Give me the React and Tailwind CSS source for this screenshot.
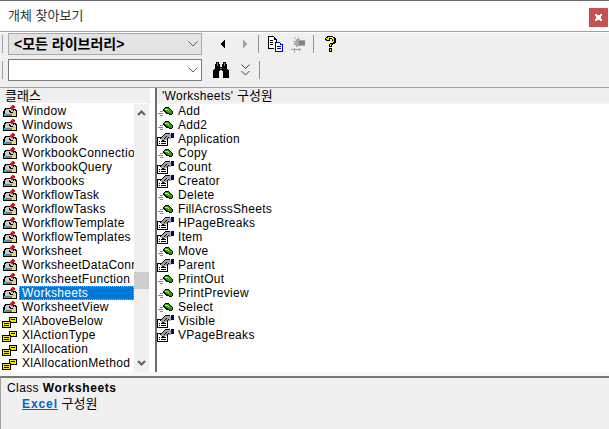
import React from "react";

const FONT = "font-['Liberation_Sans','Noto_Sans_CJK_KR',sans-serif]";

function ClassIcon() {
  return (
    <svg width="16" height="14" viewBox="0 0 16 14" shapeRendering="crispEdges" className="shrink-0">
      <path d="M3 4h9v1h2v1h1v7H1V7h1V5h1z" fill="#000" />
      <path d="M3 6h1V5h7v1h2v1h1v3H3V7z" fill="#c8c8c8" />
      <path d="M2 10h2v2H2z" fill="#10c8d8" />
      <path d="M10 10h4v2h-4z" fill="#e8e060" />
      <path d="M4 10h6v2H4z" fill="#7c7c7c" />
      <path d="M10 1h2v1h1v2h-1v1h-1v1H9V5H8V3h1V2h1z" fill="#d81818" />
      <path d="M7 6h1v1h1v1h2v1H8V8H7zM11 6h1V5h1v1h-1v1h-1z" fill="#000" />
    </svg>
  );
}

function EnumIcon() {
  return (
    <svg width="16" height="14" viewBox="0 0 16 14" shapeRendering="crispEdges" className="shrink-0">
      <path d="M7 3h8v6H7z" fill="#000" />
      <path d="M8 4h6v4H8z" fill="#f4e800" />
      <path d="M9 5h4v1H9z" fill="#000" />
      <path d="M0 7h9v7H0z" fill="#000" />
      <path d="M1 8h7v5H1z" fill="#f4e800" />
      <path d="M2 9h5v1H2zM2 11h5v1H2z" fill="#000" />
    </svg>
  );
}

function MethodIcon() {
  return (
    <svg width="17" height="14" viewBox="0 0 17 14" shapeRendering="crispEdges" className="shrink-0">
      <path d="M3 7h3v1H3zM1 9h5v1H1zM3 11h3v1H3z" fill="#8a8a8a" />
      <path d="M8 3h4v1h1v1h1v1h1v1h1v3h-1v1h-3v-1H9V9H8V8H7V7H6V5h1V4h1z" fill="#000" />
      <path d="M8 4h4v1h1v1h1v1h1v3h-3V9h-2V8H9V7H8V6H7V5h1z" fill="#28a810" />
      <path d="M8 5h3v1h1v1h-1V6H8z" fill="#c0f040" />
      <path d="M10 8h1v1h2v1h-1V9h-2z" fill="#0c5c08" />
    </svg>
  );
}

function PropIcon() {
  return (
    <svg width="17" height="14" viewBox="0 0 17 14" shapeRendering="crispEdges" className="shrink-0">
      <path d="M0 5h11v9H0z" fill="#000" />
      <path d="M1 6h9v7H1z" fill="#fff" />
      <path d="M2 9h1v1H2zM4 9h5v1H4zM2 11h1v1H2zM4 11h5v1H4z" fill="#000" />
      <path d="M4 6h1V5h1V4h1V3h1V2h6v5h-4v1H8v1H6V8H4z" fill="#a4a4a4" />
      <path d="M3 6h1V5h1V4h1V3h1V2h1V1h5v1H8v1H7v1H6v1H5v1H4v1H3z" fill="#000" />
      <path d="M7 6h1V5h1V4h1v1H9v1H8v1H7zM10 6h1V5h1v1h-1v1h-1zM5 8h2v1H5z" fill="#000" />
      <path d="M14 1h3v5h-3z" fill="#000080" />
    </svg>
  );
}

function Copy() {
  return (
    <svg width="16" height="16" viewBox="0 0 16 16" shapeRendering="crispEdges" className="shrink-0">
      <path d="M0 0h6v1h1v1h1v1h1v3H8V4H6V2H1v10h5v1H0z" fill="#000" />
      <path d="M1 1h5v1H1zM1 2h5v2h2v2H6v6H1z" fill="#fff" />
      <path d="M2 4h3v1H2zM2 6h3v1H2zM2 8h3v1H2z" fill="#000" />
      <path d="M7 6h5v1h1v1h2v8H7z" fill="#0000c0" />
      <path d="M8 7h4v2h2v6H8z" fill="#fff" />
      <path d="M9 10h4v1H9zM9 12h4v1H9z" fill="#0000c0" />
    </svg>
  );
}

function ViewDef() {
  return (
    <svg width="17" height="18" viewBox="0 0 17 18" shapeRendering="crispEdges" className="shrink-0">
      <path d="M4 2h1v1h1v1h2V2h1v2h1v1h5v6H8v1H6v-2H4V8h1V7H3V6h3V4H5V3H4z" fill="#a8a8a8" />
      <path d="M9 6h6v4H9z" fill="#808080" />
      <path d="M1 14h8v-1h1v1h1v1h-1v1H9v-1H1z" fill="#a0a0a0" />
      <path d="M4 13h1v5H4z" fill="#a0a0a0" />
    </svg>
  );
}

function Help() {
  return (
    <svg width="11" height="16" viewBox="0 0 11 16" shapeRendering="crispEdges" className="shrink-0">
      <path d="M2 0h6v1h2v1h1v5h-1v1H8v1H7v2H4V8h1V7h2V3H5v2H1V4H0V2h1V1h1zM4 12h3v4H4z" fill="#000" />
      <path d="M3 1h5v1h1v4H8v1H6V6h1V5h1V3H7V2H4v2H2V3H1V2h2zM5 8h1v2H5zM5 13h1v2H5z" fill="#f8f000" />
    </svg>
  );
}

function Binoculars() {
  return (
    <svg width="16" height="16" viewBox="0 0 16 16" shapeRendering="crispEdges" className="shrink-0">
      <path d="M3 0h3v2h1v3h2V2h1V0h3v2h1v5h1v1h1v8h-6V9H9V8H7v1H6v7H0V8h1V7h1V2h1z" fill="#000" />
      <path d="M4 1h1v3H4zM11 1h1v3h-1zM7 6h2v1H7z" fill="#808080" />
    </svg>
  );
}

function DoubleChevron() {
  return (
    <svg width="9" height="12" viewBox="0 0 9 12" fill="none" stroke="#404040" className="shrink-0">
      <path d="M0.5 0.5l4 4 4-4M0.5 7l4 4 4-4" />
    </svg>
  );
}

function ComboChevron() {
  return (
    <svg width="10" height="6" viewBox="0 0 10 6" fill="none" stroke="#606060" className="shrink-0">
      <path d="M0.5 0.5l4.5 4.5 4.5-4.5" />
    </svg>
  );
}

function ClassRow({ icon, text, selected }) {
  return (
    <div className="flex h-[14px] shrink-0 items-center pl-[2px]">
      {icon}
      <span
        className={`ml-px flex h-[14px] min-w-0 flex-1 items-center overflow-hidden whitespace-nowrap pl-[3px] text-[12px] leading-[14px] tracking-[0.3px] ${
          selected ? "bg-[#0078d7] text-white outline-1 -outline-offset-1 outline-dotted outline-[#e8a050]" : "text-black"
        }`}
      >
        {text}
      </span>
    </div>
  );
}

function MemberRow({ icon, text }) {
  return (
    <div className="flex h-[14px] shrink-0 items-center">
      {icon}
      <span className="ml-[4px] whitespace-nowrap text-[12px] leading-[14px] tracking-[0.3px] text-black">{text}</span>
    </div>
  );
}

const classes = [
  "Window", "Windows", "Workbook", "WorkbookConnection", "WorkbookQuery", "Workbooks", "WorkflowTask",
  "WorkflowTasks", "WorkflowTemplate", "WorkflowTemplates", "Worksheet", "WorksheetDataConnection",
  "WorksheetFunction", "Worksheets", "WorksheetView",
];
const enums = ["XlAboveBelow", "XlActionType", "XlAllocation", "XlAllocationMethod", "XlAllocationNamespace"];
const members = [
  ["Add", "m"], ["Add2", "m"], ["Application", "p"], ["Copy", "m"], ["Count", "p"], ["Creator", "p"],
  ["Delete", "m"], ["FillAcrossSheets", "m"], ["HPageBreaks", "p"], ["Item", "p"], ["Move", "m"],
  ["Parent", "p"], ["PrintOut", "m"], ["PrintPreview", "m"], ["Select", "m"], ["Visible", "p"], ["VPageBreaks", "p"],
];

export default function App() {
  return (
    <div className={`${FONT} flex h-[429px] w-[609px] flex-col overflow-hidden bg-white text-black`}>
      {/* Title bar */}
      <div className="flex h-[32px] shrink-0 items-start border-t border-b border-t-[#6e6e6e] border-b-[#a0a0a0] bg-white">
        <span className="ml-[8px] mt-[7px] text-[13px] leading-[16px] text-[#333]">개체 찾아보기</span>
        <div className="ml-auto mr-px mt-[7px] flex h-[19px] w-[19px] items-center justify-center bg-[#c75050]">
          <svg width="7" height="7" viewBox="0 0 7 7" shapeRendering="crispEdges">
            <path d="M0 0h2v1h3V0h2v2H6v3h1v2H5V6H2v1H0V5h1V2H0z" fill="#fff" />
          </svg>
        </div>
      </div>

      {/* Toolbar */}
      <div className="mt-px flex h-[55px] shrink-0 flex-col gap-[4px] border-b border-b-[#a0a0a0] bg-[#efefef]">
        <div className="flex h-[22px] items-center">
          <div className="ml-[2px] h-[18px] w-px bg-[#a0a0a0]" />
          <div className="ml-[5px] flex h-[22px] w-[194px] items-center justify-between border border-[#a8a8a8] bg-[#e3e3e3] pl-[5px] pr-[3px]">
            <span className="text-[14px] font-bold leading-[18px]">&lt;모든 라이브러리&gt;</span>
            <ComboChevron />
          </div>
          <svg width="5" height="8" viewBox="0 0 5 8" shapeRendering="crispEdges" className="ml-[18px]"><path d="M4 0h1v8H4V7H3V6H2V5H1V3h1V2h1V1h1z" fill="#000" /></svg>
          <svg width="5" height="8" viewBox="0 0 5 8" shapeRendering="crispEdges" className="ml-[18px]"><path d="M0 0h1v1h1v1h1v1h1v2H3v1H2v1H1v1H0z" fill="#a0a0a0" /></svg>
          <div className="ml-[10px] h-[18px] w-px bg-[#909090]" />
          <div className="ml-[9px]"><Copy /></div>
          <div className="ml-[6px]"><ViewDef /></div>
          <div className="ml-[6px] h-[18px] w-px bg-[#909090]" />
          <div className="ml-[11px]"><Help /></div>
        </div>
        <div className="flex h-[22px] items-center">
          <div className="ml-[2px] h-[18px] w-px bg-[#a0a0a0]" />
          <div className="ml-[5px] flex h-[22px] w-[194px] items-center justify-end border border-[#7a7a7a] bg-white pr-[3px]">
            <ComboChevron />
          </div>
          <div className="ml-[11px]"><Binoculars /></div>
          <div className="ml-[12px]"><DoubleChevron /></div>
          <div className="ml-[9px] h-[18px] w-px bg-[#909090]" />
        </div>
      </div>

      {/* Panes */}
      <div className="flex h-[284px] shrink-0">
        {/* Classes pane */}
        <div className="flex h-full w-[150px] shrink-0 flex-col">
          <div className="flex h-[15px] shrink-0 items-center bg-[#efefef] pl-[5px] pt-px text-[13px] leading-[14px]">클래스</div>
          <div className="h-[1px] shrink-0 bg-white" />
          <div className="flex min-h-0 flex-1">
            <div className="flex w-[134px] shrink-0 flex-col overflow-hidden">
              {classes.map((c) => (
                <ClassRow key={c} icon={<ClassIcon />} text={c} selected={c === "Worksheets"} />
              ))}
              {enums.map((c) => (
                <ClassRow key={c} icon={<EnumIcon />} text={c} />
              ))}
            </div>
            <div className="flex w-[15px] shrink-0 flex-col items-center bg-[#f0f0f0]">
              <svg width="9" height="6" viewBox="0 0 9 6" fill="none" stroke="#606060" strokeWidth="2" className="mt-[6px] shrink-0">
                <path d="M1 5l3.5-3.5L8 5" />
              </svg>
              <div className="mt-[156px] h-[17px] w-full shrink-0 bg-[#cdcdcd]" />
              <svg width="9" height="6" viewBox="0 0 9 6" fill="none" stroke="#606060" strokeWidth="2" className="mt-[71px] shrink-0">
                <path d="M1 1l3.5 3.5L8 1" />
              </svg>
            </div>
          </div>
        </div>

        {/* Splitter */}
        <div className="h-full w-[5px] shrink-0 bg-white" />
        <div className="h-full w-[2px] shrink-0 bg-[#6d6d6d]" />

        {/* Members pane */}
        <div className="flex h-full min-w-0 flex-1 flex-col">
          <div className="flex h-[14px] shrink-0 items-center bg-[#efefef] pl-[5px] pt-px text-[13px] leading-[14px]">
            <span className="text-[12px] tracking-[0.3px]">'Worksheets'</span>&nbsp;구성원
          </div>
          <div className="h-[2px] shrink-0 bg-[#f4f4f4]" />
          <div className="flex flex-col">
            {members.map(([m, k]) => (
              <MemberRow key={m} icon={k === "m" ? <MethodIcon /> : <PropIcon />} text={m} />
            ))}
          </div>
        </div>
      </div>

      {/* Details */}
      <div className="h-[4px] shrink-0 bg-[#f7f7f7]" />
      <div className="flex min-h-0 flex-1 flex-col border-t-2 border-l border-t-[#777] border-l-[#a0a0a0] bg-[#f0f0f0] pl-[6px] pt-[2px] text-[12px] leading-[16px] tracking-[0.4px]">
        <div>
          Class <span className="font-bold tracking-[0.6px]">Worksheets</span>
        </div>
        <div className="ml-[15px]">
          <span className="font-bold tracking-[0.9px] text-[#0066cc] underline">Excel</span> <span className="text-[13px] tracking-normal">구성원</span>
        </div>
      </div>
    </div>
  );
}
